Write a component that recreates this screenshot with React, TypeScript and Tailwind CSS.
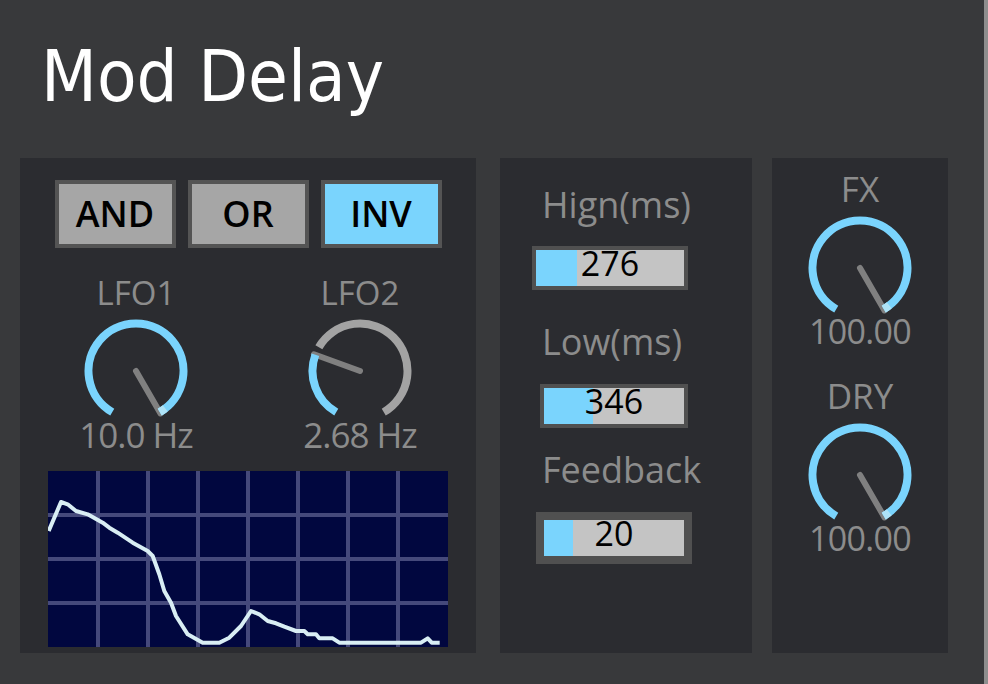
import React from 'react'

const BLUE = '#7ad4fd'

// angles are clockwise from 12 o'clock, in degrees
function polar(cx: number, cy: number, r: number, deg: number) {
  const a = (deg * Math.PI) / 180
  return [cx + r * Math.sin(a), cy - r * Math.cos(a)]
}

function arcPath(cx: number, cy: number, r: number, from: number, to: number) {
  const [x1, y1] = polar(cx, cy, r, from)
  const [x2, y2] = polar(cx, cy, r, to)
  const large = to - from > 180 ? 1 : 0
  return `M ${x1} ${y1} A ${r} ${r} 0 ${large} 1 ${x2} ${y2}`
}

function KnobDial({ angle }: { angle: number }) {
  const cx = 52
  const cy = 52
  const r = 47.5
  const [px, py] = polar(cx, cy, 49, angle)
  return (
    <svg width="104" height="98" viewBox="0 0 104 98">
      <line x1={cx} y1={cy} x2={px} y2={py} stroke="#808080" strokeWidth="6" strokeLinecap="round" />
      {angle < 140 && (
        <path d={arcPath(cx, cy, r, angle + 10, 150)} fill="none" stroke="#a3a3a3" strokeWidth="8" />
      )}
      <path d={arcPath(cx, cy, r, -150, angle)} fill="none" stroke={BLUE} strokeWidth="8" />
      {angle >= 140 && (
        <path d={arcPath(cx, cy, r, angle - 8, angle)} fill="none" stroke="#aee3f7" strokeWidth="8" />
      )}
    </svg>
  )
}

function Knob({
  label,
  value,
  angle,
  labelSize,
  valueSize,
  className = '',
}: {
  label: string
  value: string
  angle: number
  labelSize: string
  valueSize: string
  className?: string
}) {
  return (
    <div className={`w-[120px] flex flex-col items-center text-[#8c8c8c] ${className}`}>
      <div className={`${labelSize} leading-none`}>{label}</div>
      <div className="mt-[10px]">
        <KnobDial angle={angle} />
      </div>
      <div className={`${valueSize} leading-none whitespace-nowrap`}>{value}</div>
    </div>
  )
}

function ModeButton({ label, active }: { label: string; active?: boolean }) {
  return (
    <div
      className={`w-[121px] h-[68px] border-4 border-[#545454] flex items-center justify-center ${
        active ? 'bg-[#7ad4fd]' : 'bg-[#a6a6a6]'
      }`}
    >
      <span className="text-[36px] leading-none font-semibold text-black">{label}</span>
    </div>
  )
}

function NumSlider({
  value,
  fill,
  width,
  className = '',
}: {
  value: string
  fill: number
  width: number
  className?: string
}) {
  return (
    <div className={`border-[#505050] ${className}`}>
      <div className="relative h-[36px] bg-[#c4c4c4]" style={{ width }}>
        <div className="absolute left-0 top-0 h-full bg-[#7ad4fd]" style={{ width: fill }} />
        <div className="relative text-center text-[34px] leading-[27px] text-black">{value}</div>
      </div>
    </div>
  )
}

const curve: [number, number][] = [
  [0.7, 60], [13, 31], [19.7, 33.3], [28, 40], [39.7, 43.3], [54.7, 51.7], [61.3, 56.7],
  [69.7, 61.7], [84.7, 71.7], [99.7, 80], [104.7, 85], [111.3, 103.3], [116.3, 120],
  [123, 131.7], [128, 145], [139.7, 163.3], [154.7, 171.7], [171.3, 171.7], [181.3, 166.7],
  [193, 155], [203, 140], [211.3, 143.3], [219.7, 150], [228, 152.3], [236.3, 155.7],
  [248, 160], [256.3, 160], [259.7, 163.3], [268, 163.3], [271.3, 167.3], [284.7, 167.3],
  [291.3, 171.7], [373, 171.7], [379.7, 167.3], [383.7, 171.7], [391.7, 171.7],
]

function Scope() {
  return (
    <svg width="400" height="176" viewBox="0 0 400 176" className="mt-[19px]">
      <rect x="0" y="0" width="400" height="176" fill="#01073f" />
      {[50, 100, 150, 200, 250, 300, 350].map((x) => (
        <line key={x} x1={x} y1="0" x2={x} y2="176" stroke="#45497b" strokeWidth="4" />
      ))}
      {[44, 88, 132].map((y) => (
        <line key={y} x1="0" y1={y} x2="400" y2={y} stroke="#45497b" strokeWidth="4" />
      ))}
      <polyline
        points={curve.map(([x, y]) => `${x},${y}`).join(' ')}
        fill="none"
        stroke="#d9eef4"
        strokeWidth="4"
        strokeLinejoin="round"
      />
    </svg>
  )
}

export default function App() {
  return (
    <div className="w-[988px] h-[684px] flex bg-[#38393b] overflow-hidden font-['Open_Sans','Noto_Sans',sans-serif]">
      <div className="flex-1 flex flex-col">
        <h1 className="mt-[40px] ml-[41px] text-[72px] leading-none text-white font-['DejaVu_Sans_Condensed','Liberation_Sans',sans-serif]">
          Mod Delay
        </h1>

        <div className="mt-[46px] ml-[20px] flex">
          {/* LFO panel */}
          <div className="w-[456px] h-[495px] bg-[#2b2c30] flex flex-col items-center pt-[22px]">
            <div className="flex gap-[12px]">
              <ModeButton label="AND" />
              <ModeButton label="OR" />
              <ModeButton label="INV" active />
            </div>
            <div className="mt-[28px] flex gap-[104px]">
              <Knob label="LFO1" value="10.0 Hz" angle={150} labelSize="text-[33px]" valueSize="text-[35px] tracking-[-1px]" />
              <Knob label="LFO2" value="2.68 Hz" angle={-70} labelSize="text-[33px]" valueSize="text-[35px] tracking-[-1px]" />
            </div>
            <Scope />
          </div>

          {/* time panel */}
          <div className="ml-[24px] w-[252px] h-[495px] bg-[#2b2c30] flex flex-col items-start pt-[29px] text-[#8c8c8c]">
            <div className="ml-[42px] text-[36px] leading-none">Hign(ms)</div>
            <NumSlider className="mt-[23px] ml-[32px] border-4" width={148} fill={41} value="276" />
            <div className="mt-[34px] ml-[42px] text-[36px] leading-none">Low(ms)</div>
            <NumSlider className="mt-[24px] ml-[40px] border-4" width={140} fill={49} value="346" />
            <div className="mt-[24px] ml-[42px] text-[36px] leading-none">Feedback</div>
            <NumSlider className="mt-[24px] ml-[36px] border-8" width={140} fill={29} value="20" />
          </div>

          {/* mix panel */}
          <div className="ml-[20px] w-[176px] h-[495px] bg-[#2b2c30] flex flex-col items-center pt-[13px]">
            <Knob label="FX" value="100.00" angle={150} labelSize="text-[35px]" valueSize="text-[34px] tracking-[-0.7px]" />
            <Knob
              label="DRY"
              value="100.00"
              angle={150}
              labelSize="text-[35px]"
              valueSize="text-[34px] tracking-[-0.7px]"
              className="mt-[30px]"
            />
          </div>
        </div>
      </div>
      <div className="w-[4px] h-full bg-[#8e8e8e]" />
    </div>
  )
}
